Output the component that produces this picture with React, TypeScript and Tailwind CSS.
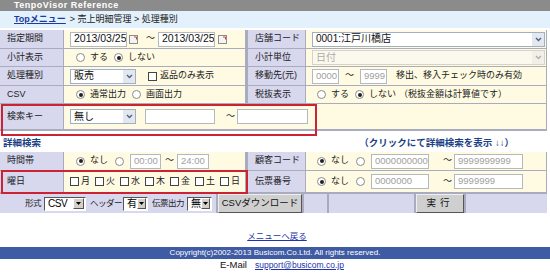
import React from "react";

const jp = "font-['Liberation_Sans','Noto_Sans_CJK_JP',sans-serif]";

const Radio = ({ on }: { on?: boolean }) => (
  <span className="inline-flex w-[9px] h-[9px] rounded-full border border-[#8a8a8a] bg-white items-center justify-center shrink-0">
    {on && <span className="w-[4px] h-[4px] rounded-full bg-[#222]" />}
  </span>
);

const Check = () => <span className="inline-block w-[9px] h-[9px] border border-[#444] bg-white shrink-0" />;

const Field = ({ v, w, dim }: { v: string; w: number; dim?: boolean }) => (
  <div
    className={`h-[15px] border border-[#b4b9c0] bg-white pl-[3px] flex items-center shrink-0 overflow-hidden ${dim ? "text-[#a0a0a0] text-[9.5px]" : "text-[#111] text-[10.5px]"}`}
    style={{ width: w }}
  >
    {v}
  </div>
);

const Cal = () => (
  <svg width="9" height="9" viewBox="0 0 9 9" className="shrink-0">
    <rect x="0.5" y="0.5" width="8" height="8" fill="#f4f4f4" stroke="#8d8d8d" />
    <path d="M5 2h2.5v2.5" fill="none" stroke="#d04040" />
  </svg>
);

const Sel = ({ v, w, off }: { v: string; w: number; off?: boolean }) => (
  <div
    className={`h-[15px] border flex items-center shrink-0 ${off ? "border-[#d6d3c4] bg-[#fbf9ee] text-[#aaa]" : "border-[#9fb0c4] bg-white text-[#111]"}`}
    style={{ width: w }}
  >
    <span className="flex-1 pl-[3px] text-[10px] leading-none">{v}</span>
    <span className={`w-[12px] h-[13px] flex items-center justify-center ${off ? "bg-[#f0efe8]" : "bg-[#e3e8f0]"}`}>
      <svg width="7" height="5" viewBox="0 0 7 5">
        <path d="M1 1l2.5 2.5L6 1" fill="none" stroke={off ? "#b0b0b0" : "#4d6185"} strokeWidth="1.4" />
      </svg>
    </span>
  </div>
);

const OldSel = ({ v, w }: { v: string; w: number }) => (
  <div className="h-[14px] shrink-0 border border-t-[#555] border-l-[#555] border-b-white border-r-white bg-white flex items-center" style={{ width: w }}>
    <span className="flex-1 pl-[3px] text-[10px] leading-none text-black">{v}</span>
    <span className="w-[11px] h-[11px] mr-px bg-[#d4d0c8] border border-t-white border-l-white border-b-[#555] border-r-[#555] flex items-center justify-center">
      <svg width="5" height="3" viewBox="0 0 5 3">
        <path d="M0 0h5L2.5 3z" fill="#000" />
      </svg>
    </span>
  </div>
);

const Lbl = ({ t, w, h }: { t: string; w: number; h: number }) => (
  <div className="bg-[#d7d7ee] flex items-center pl-[7px] text-[9px] text-[#222] shrink-0" style={{ width: w, height: h }}>
    {t}
  </div>
);

const Val = ({ w, children }: { w: number; children?: React.ReactNode }) => (
  <div className="bg-[#fffbe2] flex items-center pl-[6px] text-[9px] text-[#222] shrink-0 whitespace-nowrap" style={{ width: w }}>
    {children}
  </div>
);

const Row = ({ h, children }: { h: number; children: React.ReactNode }) => (
  <div className="flex gap-px" style={{ height: h }}>
    {children}
  </div>
);

export default function App() {
  return (
    <div className={`relative w-[550px] h-[279px] bg-white overflow-hidden ${jp}`}>
      <div className="h-[11px] bg-[#8b8b8b] pl-[14px] flex items-center text-[9px] font-bold text-white tracking-[0.5px] leading-none">
        TenpoVisor Reference
      </div>
      <div className="h-[17px] bg-[#e2f1fb] pl-[14px] flex items-center gap-[4px] text-[9px] text-[#222]">
        <span className="text-[#1a3c9c] underline font-bold">Topメニュー</span>
        <span>&gt; 売上明細管理 &gt; 処理種別</span>
      </div>

      <div className="mt-[2px] w-[547px] bg-[#a9abbe] flex flex-col gap-px pb-[2px]">
        <Row h={18}>
          <Lbl t="指定期間" w={63} h={18} />
          <Val w={181}>
            <Field v="2013/03/25" w={57} />
            <span className="ml-[2px]" />
            <Cal />
            <span className="ml-[8px] mr-[3px]">～</span>
            <Field v="2013/03/25" w={57} />
            <span className="ml-[3px]" />
            <Cal />
          </Val>
          <div className="w-px" />
          <Lbl t="店舗コード" w={57} h={18} />
          <Val w={240}>
            <Sel v="0001:江戸川橋店" w={233} />
          </Val>
        </Row>
        <Row h={17}>
          <Lbl t="小計表示" w={63} h={17} />
          <Val w={181}>
            <span className="ml-[6px]" />
            <Radio />
            <span className="ml-[5px]">する</span>
            <span className="ml-[6px]" />
            <Radio on />
            <span className="ml-[5px]">しない</span>
          </Val>
          <div className="w-px" />
          <Lbl t="小計単位" w={57} h={17} />
          <Val w={240}>
            <Sel v="日付" w={233} off />
          </Val>
        </Row>
        <Row h={18}>
          <Lbl t="処理種別" w={63} h={18} />
          <Val w={181}>
            <Sel v="販売" w={66} />
            <span className="ml-[12px]" />
            <Check />
            <span className="ml-[3px]">返品のみ表示</span>
          </Val>
          <div className="w-px" />
          <Lbl t="移動先(元)" w={57} h={18} />
          <Val w={240}>
            <Field v="0000" w={27} dim />
            <span className="mx-[6px]">～</span>
            <Field v="9999" w={27} dim />
            <span className="ml-[9px]">移出、移入チェック時のみ有効</span>
          </Val>
        </Row>
        <Row h={17}>
          <Lbl t="CSV" w={63} h={17} />
          <Val w={181}>
            <span className="ml-[6px]" />
            <Radio on />
            <span className="ml-[5px]">通常出力</span>
            <span className="ml-[6px]" />
            <Radio />
            <span className="ml-[5px]">画面出力</span>
          </Val>
          <div className="w-px" />
          <Lbl t="税抜表示" w={57} h={17} />
          <Val w={240}>
            <span className="ml-[5px]" />
            <Radio />
            <span className="ml-[5px]">する</span>
            <span className="ml-[6px]" />
            <Radio on />
            <span className="ml-[5px]">しない</span>
            <span className="ml-[3px]">（税抜金額は計算値です）</span>
          </Val>
        </Row>
        <Row h={25}>
          <Lbl t="検索キー" w={63} h={25} />
          <Val w={482}>
            <Sel v="無し" w={66} />
            <span className="ml-[9px]" />
            <Field v="" w={70} />
            <span className="ml-[11px] mr-[2px]">～</span>
            <Field v="" w={71} />
          </Val>
        </Row>
      </div>

      <div className="mt-[4px] h-[17px] flex items-center justify-between pl-[3px] pr-[36px] text-[9.5px] font-bold text-[#1c3f86]">
        <span>詳細検索</span>
        <span>（クリックにて詳細検索を表示 ↓↓）</span>
      </div>

      <div className="w-[547px] bg-[#a9abbe] flex flex-col gap-px pb-[2px]">
        <Row h={18}>
          <Lbl t="時間帯" w={63} h={18} />
          <Val w={181}>
            <span className="ml-[6px]" />
            <Radio on />
            <span className="ml-[5px]">なし</span>
            <span className="ml-[7px]" />
            <Radio />
            <span className="ml-[6px]" />
            <Field v="00:00" w={31} dim />
            <span className="ml-[4px] mr-[3px]">～</span>
            <Field v="24:00" w={32} dim />
          </Val>
          <div className="w-px" />
          <Lbl t="顧客コード" w={57} h={18} />
          <Val w={240}>
            <span className="ml-[5px]" />
            <Radio on />
            <span className="ml-[5px]">なし</span>
            <span className="ml-[7px]" />
            <Radio />
            <span className="ml-[6px]" />
            <Field v="0000000000" w={58} dim />
            <span className="ml-[14px] mr-[2px]">～</span>
            <Field v="9999999999" w={69} dim />
          </Val>
        </Row>
        <Row h={21}>
          <Lbl t="曜日" w={63} h={21} />
          <Val w={181}>
            {["月", "火", "水", "木", "金", "土", "日"].map((d, i) => (
              <span key={d} className={`flex items-center gap-[2px] ${i ? "ml-[5px]" : ""}`}>
                <Check />
                <span>{d}</span>
              </span>
            ))}
          </Val>
          <div className="w-px" />
          <Lbl t="伝票番号" w={57} h={21} />
          <Val w={240}>
            <span className="ml-[5px]" />
            <Radio on />
            <span className="ml-[5px]">なし</span>
            <span className="ml-[7px]" />
            <Radio />
            <span className="ml-[6px]" />
            <Field v="0000000" w={58} dim />
            <span className="ml-[14px] mr-[2px]">～</span>
            <Field v="9999999" w={69} dim />
          </Val>
        </Row>
      </div>

      <div className="h-[19px] w-[547px] flex gap-[2px] bg-[#a9abbe] text-[8.5px] text-[#222] whitespace-nowrap">
        <div className="w-[216px] bg-[#d7d7ee] flex items-center pl-[25px] tracking-[-0.5px]">
          <span className="w-[19px] shrink-0">形式</span>
          <OldSel v="CSV" w={42} />
          <span className="ml-[4px] w-[33px] shrink-0">ヘッダー</span>
          <OldSel v="有" w={25} />
          <span className="ml-[4px] w-[35px] shrink-0">伝票出力</span>
          <OldSel v="無" w={25} />
        </div>
        <button className="w-[84px] bg-[#cfcfcf] border border-t-[#eee] border-l-[#eee] border-b-[#555] border-r-[#555] text-[9.5px] text-[#111] tracking-normal">
          CSVダウンロード
        </button>
        <div className="w-[23px] bg-[#d7d7ee]" />
        <div className="w-[85px] bg-[#d7d7ee]" />
        <button className="w-[48px] bg-[#cfcfcf] border border-t-[#eee] border-l-[#eee] border-b-[#555] border-r-[#555] text-[9.5px] text-[#111] tracking-[4px]">
          実行
        </button>
        <div className="flex-1 bg-[#d7d7ee]" />
      </div>

      <div className="mt-[17px] h-[14px] flex justify-center pl-[4px] text-[8.5px] text-[#2233aa] underline">メニューへ戻る</div>
      <div className="mt-[3px] h-[12px] bg-[#3e5ba3] flex items-center justify-center text-[8px] text-white">
        Copyright(c)2002-2013 Busicom.Co.Ltd. All rights reserved.
      </div>
      <div className="flex items-center h-[13px] pl-[220px] gap-[8px] text-[9.5px] text-[#111]">
        <span>E-Mail</span>
        <span className="text-[8.5px] text-[#2233aa] underline">support@busicom.co.jp</span>
      </div>

      <div className="absolute left-[1px] top-[104px] w-[316px] h-[32px] border-2 border-[#cc2233]" />
      <div className="absolute left-[1px] top-[170px] w-[247px] h-[24px] border-2 border-[#cc2233]" />
    </div>
  );
}
